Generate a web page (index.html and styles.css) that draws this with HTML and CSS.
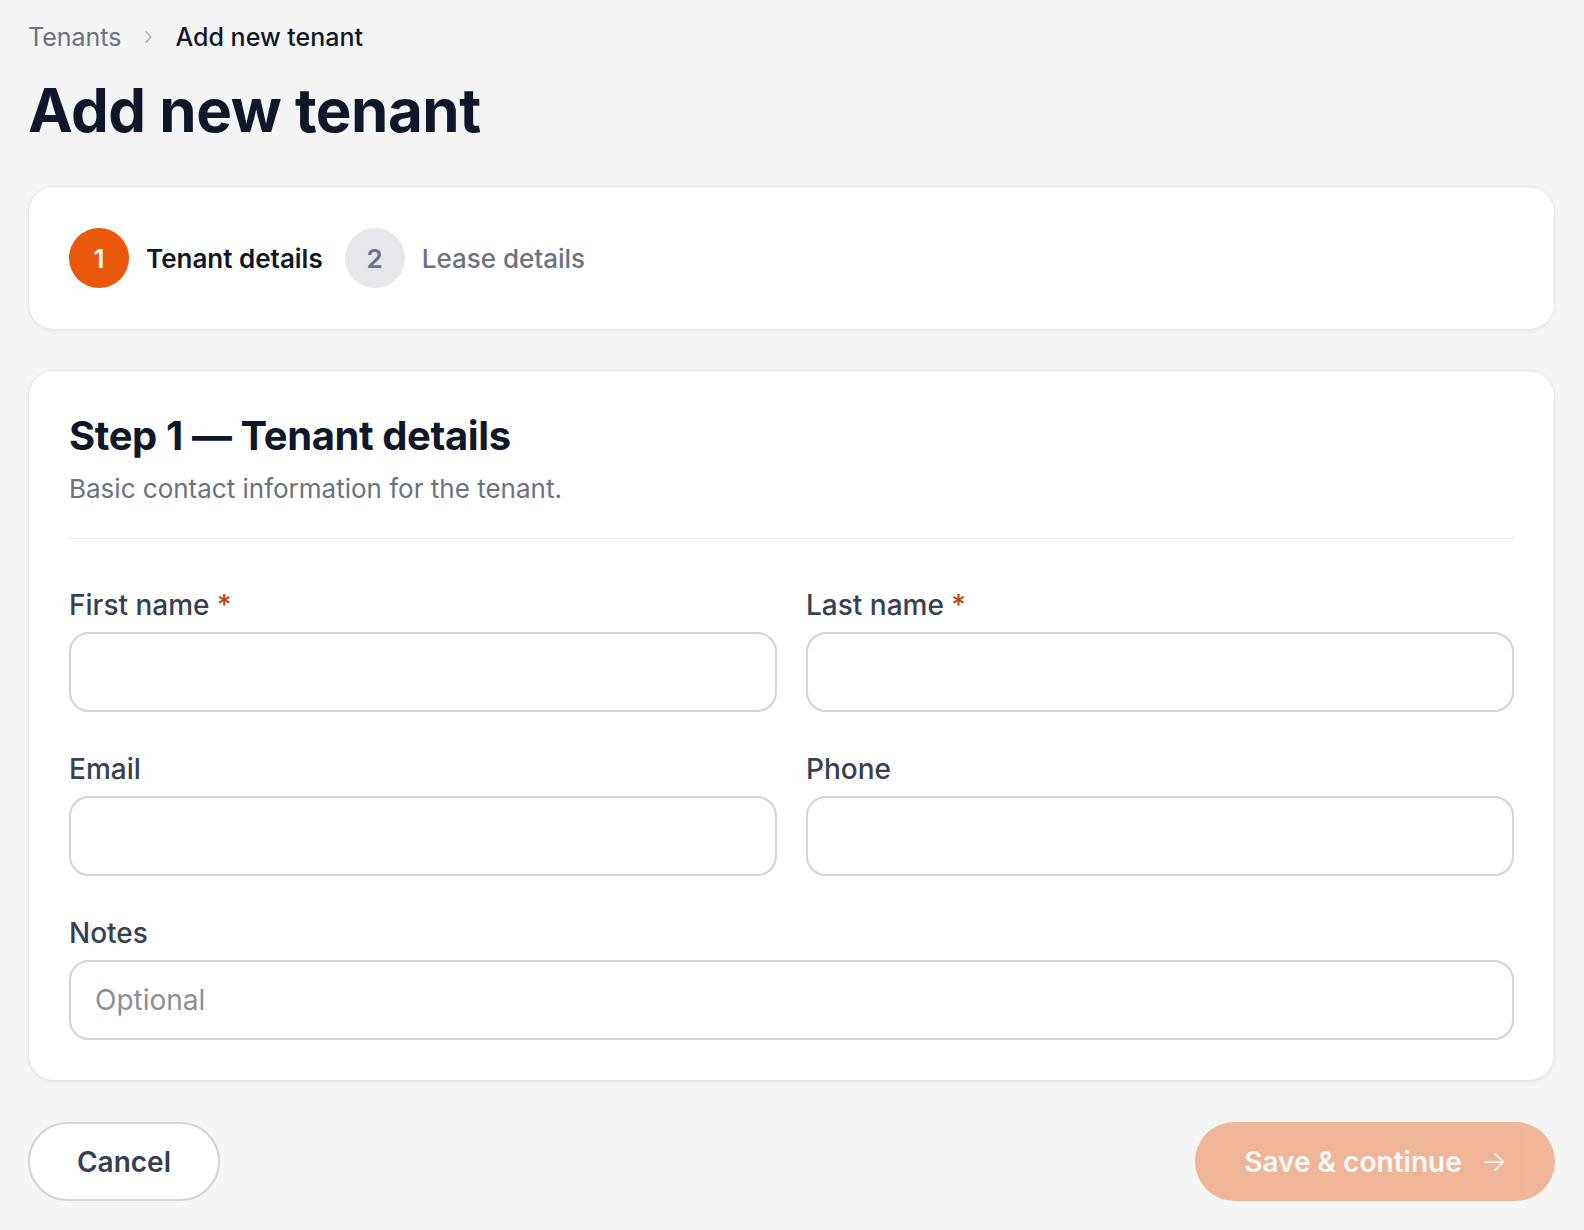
FILE: index.html
```
<!DOCTYPE html>
<html lang="en">
<head>
<meta charset="utf-8">
<title>Add new tenant</title>
<link rel="stylesheet" href="styles.css">
</head>
<body>
<main class="page">
  <nav class="crumbs">
    <a class="crumb-link" href="#">Tenants</a>
    <svg class="crumb-sep" viewBox="0 0 24 24" width="18" height="18" fill="none" stroke="currentColor" stroke-width="1.6" stroke-linecap="round" stroke-linejoin="round"><path d="M9 5l7 7-7 7"/></svg>
    <span class="crumb-current">Add new tenant</span>
  </nav>
  <h1 class="page-title">Add new tenant</h1>

  <section class="card steps">
    <div class="step active">
      <span class="step-num">1</span>
      <span class="step-label">Tenant details</span>
    </div>
    <div class="step">
      <span class="step-num">2</span>
      <span class="step-label">Lease details</span>
    </div>
  </section>

  <section class="card form-card">
    <header class="form-head">
      <h2 class="form-title">Step 1 — Tenant details</h2>
      <p class="form-sub">Basic contact information for the tenant.</p>
    </header>
    <div class="form-grid">
      <label class="field">
        <span class="field-label">First name <span class="req">*</span></span>
        <input class="input" type="text">
      </label>
      <label class="field">
        <span class="field-label">Last name <span class="req">*</span></span>
        <input class="input" type="text">
      </label>
      <label class="field">
        <span class="field-label">Email</span>
        <input class="input" type="email">
      </label>
      <label class="field">
        <span class="field-label">Phone</span>
        <input class="input" type="tel">
      </label>
      <label class="field wide">
        <span class="field-label">Notes</span>
        <input class="input" type="text" placeholder="Optional">
      </label>
    </div>
  </section>

  <footer class="actions">
    <button class="btn btn-ghost" type="button">Cancel</button>
    <button class="btn btn-primary" type="button" disabled>
      <span>Save &amp; continue</span>
      <svg class="btn-arrow" viewBox="0 0 24 24" width="28" height="28" fill="none" stroke="currentColor" stroke-width="1.5" stroke-linecap="round" stroke-linejoin="round"><path d="M4 12h16M13 5l7 7-7 7"/></svg>
    </button>
  </footer>
</main>
</body>
</html>
```

FILE: styles.css
```
* { box-sizing: border-box; }
html, body { margin: 0; padding: 0; }
body {
  background: #f5f5f5;
  font-family: Inter, "Noto Sans", "Liberation Sans", sans-serif;
  color: #0f172a;
}
.page {
  padding: 19px 29px 40px 28px;
  display: flex;
  flex-direction: column;
}
.crumbs {
  display: flex;
  align-items: center;
  gap: 18px;
  font-size: 25px;
  line-height: 36px;
}
.crumb-link { color: #6b7280; text-decoration: none; }
.crumb-sep { color: #9ca3af; }
.crumb-current { color: #0f172a; font-weight: 500; }
.page-title {
  margin: 22px 0 43px;
  font-size: 60px;
  line-height: 66px;
  font-weight: 700;
  letter-spacing: -0.008em;
  color: #0f172a;
}
.card {
  background: #fff;
  border: 1px solid #e5e5e5;
  border-radius: 26px;
  box-shadow: 0 2px 4px rgba(0,0,0,0.05);
}
.steps {
  display: flex;
  align-items: center;
  gap: 22px;
  padding: 41px 40px;
}
.step {
  display: flex;
  align-items: center;
  gap: 17px;
}
.step-num {
  width: 60px;
  height: 60px;
  border-radius: 50%;
  background: #e5e7eb;
  color: #6b7280;
  display: flex;
  align-items: center;
  justify-content: center;
  font-size: 26px;
  font-weight: 600;
}
.step-label {
  font-size: 26px;
  color: #6b7280;
  font-weight: 500;
}
.step.active .step-num { background: #ea580c; color: #fff; }
.step.active .step-label { color: #0f172a; font-weight: 600; }

.form-card {
  margin-top: 40px;
  padding: 40px 40px 40px;
}
.form-head {
  padding-bottom: 30px;
  border-bottom: 1px solid #e5e7eb;
}
.form-title {
  margin: 0;
  font-size: 40px;
  line-height: 50px;
  font-weight: 700;
  letter-spacing: -0.01em;
  color: #0f172a;
}
.form-sub {
  margin: 8px 0 0;
  font-size: 26px;
  line-height: 39px;
  color: #6b7280;
}
.form-grid {
  margin-top: 46px;
  display: grid;
  grid-template-columns: 1fr 1fr;
  column-gap: 29px;
  row-gap: 37px;
}
.field {
  display: flex;
  flex-direction: column;
  gap: 7px;
}
.field.wide { grid-column: 1 / -1; }
.field-label {
  font-size: 28px;
  line-height: 40px;
  font-weight: 500;
  color: #374151;
}
.req { color: #c2410c; }
.input {
  height: 80px;
  border: 2px solid #d4d4d8;
  border-radius: 20px;
  background: #fff;
  padding: 0 24px;
  font-family: inherit;
  font-size: 28px;
  color: #0f172a;
  outline: none;
}
.input::placeholder { color: #8e8e93; }

.actions {
  margin-top: 41px;
  display: flex;
  justify-content: space-between;
  align-items: center;
}
.btn {
  height: 79px;
  border-radius: 40px;
  font-family: inherit;
  font-size: 28px;
  font-weight: 600;
  display: flex;
  align-items: center;
  justify-content: center;
  cursor: pointer;
}
.btn-ghost {
  width: 192px;
  background: #fff;
  border: 2px solid #d4d4d8;
  color: #334155;
}
.btn-primary {
  width: 360px;
  gap: 18px;
  padding: 0 46px 0 48px;
  background: #ea580c;
  border: 0;
  color: #fff;
  opacity: 0.4;
}
.btn-arrow { flex: none; }
```
